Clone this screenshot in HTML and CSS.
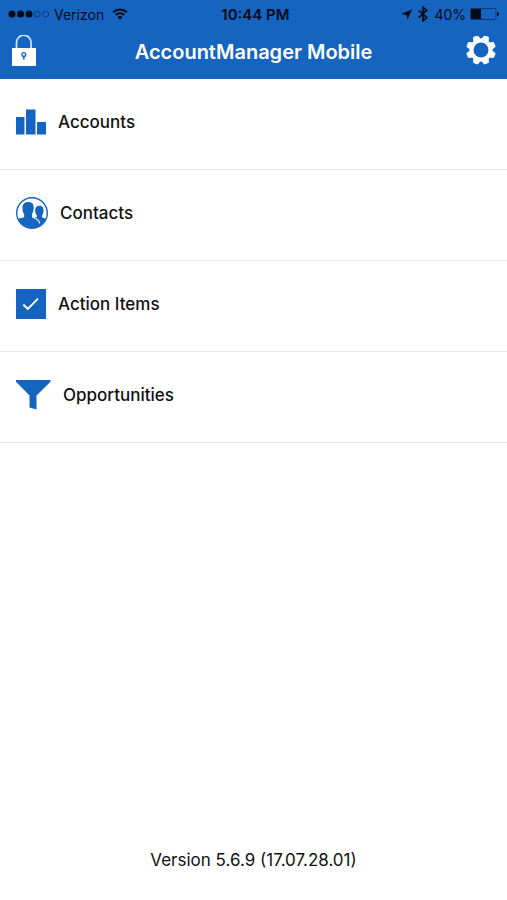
FILE: index.html
```html
<!DOCTYPE html>
<html lang="en">
<head>
<meta charset="utf-8">
<meta name="viewport" content="width=device-width, initial-scale=1">
<title>AccountManager Mobile</title>
<link rel="stylesheet" href="styles.css">
</head>
<body>
<header class="header">
  <div class="status">
    <div class="status-left">
      <svg width="42" height="8" viewBox="0 0 42 8" aria-hidden="true"><g fill="#020b18"><circle cx="4" cy="4" r="3.5"/><circle cx="12.5" cy="4" r="3.5"/><circle cx="21" cy="4" r="3.5"/></g><g fill="none" stroke="#0b3a78"><circle cx="29.3" cy="4" r="3"/><circle cx="37.7" cy="4" r="3"/></g></svg>
      <span>Verizon</span>
      <svg class="wifi" width="16" height="12" viewBox="0 0 16 12" fill="none" stroke="#020b18" stroke-width="2" aria-hidden="true"><path d="M1 4.2a10.200 10.200 0 0 1 14 0M3.700 7a6.200 6.200 0 0 1 8.600 0"/><path d="M5.500 9.100a3.700 3.700 0 0 1 5 0L8 11.700z" fill="#020b18" stroke="none"/></svg>
    </div>
    <span class="time">10:44 PM</span>
    <div class="status-right">
      <svg width="11" height="11" viewBox="0 0 11 11" aria-hidden="true"><path d="M11 .5 6.500 10.800 5.600 6 .2 4.900z" fill="#020b18"/></svg>
      <svg class="bluetooth" width="10" height="16" viewBox="0 0 10 16" fill="none" stroke="#020b18" stroke-width="1.700" aria-hidden="true"><path d="M.7 4.300 8.700 11.600 5 14.800V1.200l3.700 3.200L.7 11.700"/></svg>
      <span>40%</span>
      <svg width="29" height="12" viewBox="0 0 29 12" aria-hidden="true"><rect x=".5" y=".5" width="25.500" height="11" rx="1.500" fill="none" stroke="#0b3a78"/><path d="M1 1h10v10H1z" fill="#000a18"/><path d="M27 4q2 0 2 2t-2 2z" fill="#020b18"/></svg>
    </div>
  </div>
  <div class="bar">
    <button class="icon-button" type="button" aria-label="Lock">
      <svg width="25" height="32" viewBox="0 0 25 32" aria-hidden="true"><path d="M4.500 14V7.500a7.300 7.300 0 0 1 14.600 0V14" fill="none" stroke="#d5e8ff" stroke-width="1.700"/><path d="M0 13h24V31H0z" fill="#fff"/><circle cx="11.800" cy="19.500" r="1.900" fill="none" stroke="#1565c0" stroke-width="1.300"/><path d="M11.800 21v3.500" stroke="#1565c0" stroke-width="1.500"/></svg>
    </button>
    <h1 class="title">AccountManager Mobile</h1>
    <button class="icon-button" type="button" aria-label="Settings">
      <svg width="30" height="30" viewBox="-15 -14 30 30" aria-hidden="true"><g fill="#fff" transform="rotate(22.500)"><path id="teeth" d="M-4-10-2.600-14.700Q0-15.200 2.600-14.700L4-10V10L2.600 14.700Q0 15.200-2.600 14.700L-4 10z"/><use href="#teeth" transform="rotate(45)"/><use href="#teeth" transform="rotate(90)"/><use href="#teeth" transform="rotate(135)"/><circle r="11.500"/></g><circle r="7.500" fill="#1565c0"/></svg>
    </button>
  </div>
</header>
<main class="main">
  <nav aria-label="Main">
    <a class="row" href="#accounts">
      <svg width="30" height="26" viewBox="0 0 30 26" fill="#1565c0" aria-hidden="true"><path d="M0 8h8.500v17.500H0zM10 .5h9.500v25H10zM21 13h9v12.500h-9z"/></svg>
      <span>Accounts</span>
    </a>
    <a class="row" href="#contacts">
      <svg width="32" height="32" viewBox="0 0 32 32" aria-hidden="true"><defs><clipPath id="disc"><circle cx="16" cy="16" r="15"/></clipPath></defs><g clip-path="url(#disc)" fill="#1565c0"><path d="M23.300 8.700c3.300 0 4.400 2.300 4.200 5.300-.1 2.300-.7 3.700-1.500 4.700v1.500c1.500 1 4 1 6 2v10H17V21c2-.3 3.300-.6 3.900-1.200V18.500c-1-1-1.600-2.200-1.700-4.400C19 11 20.200 8.700 23.300 8.700z"/><path d="M12.300 5c4.200 0 5.700 2.500 5.400 6.300-.2 3-.8 4.400-1.700 5.800v3.400c2 1.700 7 2.200 8.200 6.200l.8 6H-2v-10c2-1.500 8-1 10.200-2.700v-3c-1.200-1.400-1.600-2.700-1.700-5.600C6.300 7.500 8 5 12.300 5z"/><path d="M17.800 20.800c3.200 1.300 5.500 2.500 5.900 5.700" fill="none" stroke="#fff" stroke-width="1.100"/></g><circle cx="16" cy="16" r="15.300" fill="none" stroke="#1565c0" stroke-width="1.400"/></svg>
      <span>Contacts</span>
    </a>
    <a class="row" href="#action-items">
      <svg width="30" height="30" viewBox="0 0 30 30" aria-hidden="true"><path d="M0 0h30v30H0z" fill="#1565c0"/><path d="m7.300 15.500 4.500 4.500L22 9.700" fill="none" stroke="#fff" stroke-width="1.900"/></svg>
      <span>Action Items</span>
    </a>
    <a class="row" href="#opportunities">
      <svg width="35" height="30" viewBox="0 0 35 30" aria-hidden="true"><path d="M0 0h34.500v1.800L20.500 15.500V29.500l-7-2V15.500L0 1.800z" fill="#1565c0"/></svg>
      <span>Opportunities</span>
    </a>
  </nav>
  <footer class="version">Version 5.6.9 (17.07.28.01)</footer>
</main>
</body>
</html>
```
FILE: styles.css
```css
* {
  box-sizing: border-box;
}

body {
  margin: 0;
  min-height: 100vh;
  display: flex;
  flex-direction: column;
  background: #fff;
  color: #111;
  font-family: Inter, "Liberation Sans", sans-serif;
  font-size: 17px;
}

svg {
  display: block;
  flex: none;
}

.header {
  background: #1565c0;
  color: #fff;
}

.status {
  display: grid;
  grid-template-columns: 1fr auto 1fr;
  align-items: center;
  height: 28px;
  padding: 0 8px;
  color: #020b18;
  font-size: 14px;
}

.status-left,
.status-right {
  display: flex;
  align-items: center;
  gap: 4px;
}

.status-right {
  justify-content: flex-end;
}

.wifi {
  margin-left: 4px;
}

.bluetooth {
  margin: 0 2px;
}

.time {
  padding-left: 4px;
  font-size: 15px;
  font-weight: 600;
}

.bar {
  display: flex;
  align-items: center;
  justify-content: space-between;
  height: 51px;
  padding: 0 11px 6px 12px;
}

.icon-button {
  padding: 0;
  border: 0;
  background: none;
  cursor: pointer;
}

.title {
  margin: 0;
  padding: 2px 0 0 4px;
  font-size: 20px;
  line-height: 24px;
  font-weight: 600;
}

.main {
  flex: 1;
  display: flex;
  flex-direction: column;
  justify-content: space-between;
}

.row {
  display: flex;
  align-items: center;
  gap: 12px;
  height: 91px;
  padding: 0 16px 4px;
  border-bottom: 1px solid #e6e6e6;
  color: inherit;
  font-weight: 500;
  text-decoration: none;
}

.version {
  padding: 30px 16px;
  line-height: 20px;
  text-align: center;
}
```
